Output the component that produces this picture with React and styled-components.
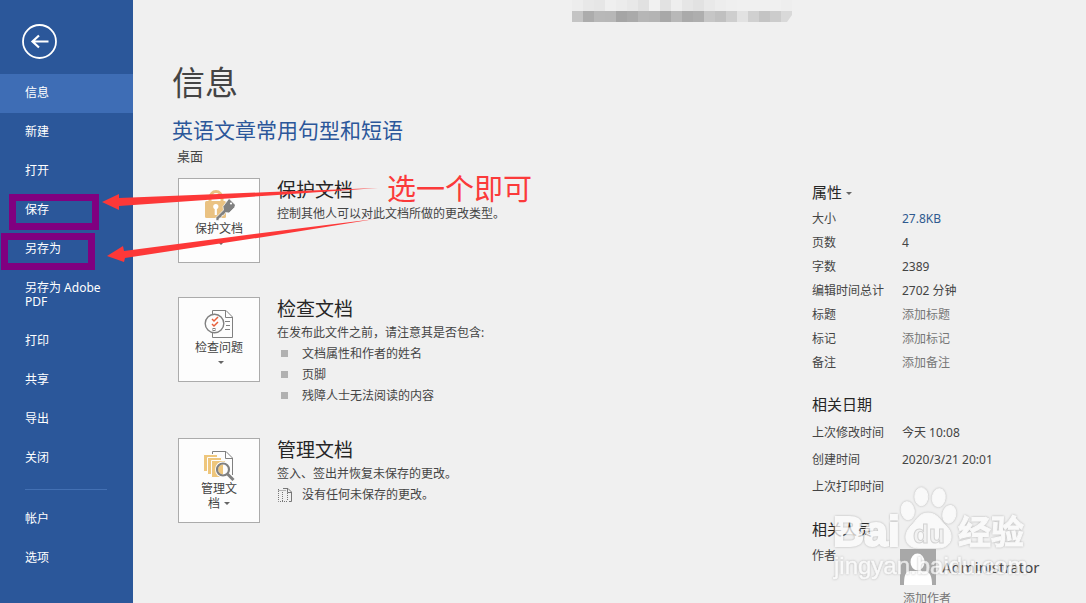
import React from 'react';
import styled, { createGlobalStyle } from 'styled-components';

const GlobalStyle = createGlobalStyle`
  * { box-sizing: border-box; }
  body {
    margin: 0;
    background: #f0f0f0;
    color: #444;
    font: 12px/24px "Noto Sans", "Noto Sans CJK SC", sans-serif;
  }
  button { font: inherit; color: inherit; }
`;

const Shell = styled.div`
  position: relative;
  display: flex;
  height: 100vh;
  overflow: hidden;
`;

const Sidebar = styled.nav`
  flex: 0 0 133px;
  background: #2b579a;
  color: #fff;
`;

const BackButton = styled.button`
  display: block;
  margin: 23px 0 15px 21px;
  padding: 0;
  width: 36px;
  height: 36px;
  border: 0;
  background: none;
  svg { display: block; }
`;

const NavItem = styled.button`
  display: block;
  width: 100%;
  padding: 12px 25px 13px;
  border: 0;
  background: ${(p) => (p.$active ? '#3e6db5' : 'transparent')};
  line-height: 14px;
  text-align: left;
`;

const Divider = styled.hr`
  height: 1px;
  margin: 11px 26px 10px 25px;
  border: 0;
  background: #4370b3;
`;

const Main = styled.main`
  flex: 1;
  min-width: 0;
  padding: 61px 0 0 39px;
`;

const Title = styled.h1`
  margin: 0;
  font-size: 33px;
  line-height: 44px;
  font-weight: 400;
`;

const DocName = styled.h2`
  margin: 0;
  padding-top: 11px;
  font-size: 21px;
  line-height: 28px;
  font-weight: 400;
  color: #2b579a;
`;

const DocPath = styled.p`
  margin: 0 5px 10px;
  font-size: 13px;
`;

const Columns = styled.div`
  display: grid;
  grid-template-columns: 1fr 274px;
`;

const Sections = styled.div`
  display: flex;
  flex-direction: column;
  gap: 32px;
  padding-left: 6px;
`;

const Section = styled.section`
  display: flex;
  align-items: flex-start;
  gap: 17px;
  min-height: 87px;
`;

const TileButton = styled.button`
  display: flex;
  flex-direction: column;
  align-items: center;
  flex: 0 0 82px;
  height: 85px;
  padding: 10px 15px 0;
  border: 1px solid #ababab;
  background: #fdfdfd;
  line-height: 15px;
  svg { display: block; flex: none; }
`;

const TileLabel = styled.span`
  display: block;
`;

const Caret = styled.i`
  display: inline-block;
  margin: ${(p) => (p.$below ? '6px 0 0 3px' : '0 0 3px 4px')};
  border: solid transparent;
  border-width: 3px 3px 0;
  border-top-color: #666;
`;

const SectionTitle = styled.h3`
  margin: 0;
  font-size: 19px;
  line-height: 24px;
  font-weight: 400;
  color: #262626;
`;

const Text = styled.p`
  margin: 0;
  padding-top: 2px;
  line-height: 20px;
`;

const Bullets = styled.ul`
  margin: 0;
  padding: 0 0 0 4px;
  list-style: none;
`;

const Bullet = styled.li`
  display: flex;
  align-items: center;
  gap: 14px;
  line-height: 21px;
  &::before {
    content: '';
    width: 7px;
    height: 7px;
    background: #b1b1b1;
  }
`;

const Note = styled.p`
  display: flex;
  align-items: center;
  gap: 9px;
  margin: 0;
  line-height: 21px;
`;

const Properties = styled.aside`
  padding-top: 2px;
`;

const GroupTitle = styled.h4`
  margin: 0 0 3px;
  font-size: 15px;
  line-height: 24px;
  font-weight: 400;
  color: #262626;
`;

const PropTable = styled.table`
  margin-bottom: 17px;
  border-collapse: collapse;
  th, td {
    height: ${(p) => p.$row}px;
    padding: 0;
    font-weight: 400;
    text-align: left;
    white-space: nowrap;
  }
  th { width: 90px; }
`;

const Value = styled.td`
  color: ${(p) => (p.$hint ? '#777' : p.$accent ? '#2f5a8f' : '#444')};
`;

const AuthorRow = styled.div`
  display: flex;
  align-items: flex-start;
`;

const AuthorLabel = styled.span`
  flex: 0 0 88px;
`;

const Person = styled.div`
  display: flex;
  align-items: center;
  gap: 6px;
  padding-top: 5px;
  font-size: 15px;
  svg { display: block; }
`;

const AddAuthor = styled.p`
  margin: 2px 0 0 91px;
  color: #777;
`;

const Overlay = styled.svg`
  position: absolute;
  left: 0;
  top: 0;
  pointer-events: none;
`;

const Callout = styled.p`
  position: absolute;
  left: 387px;
  top: 169px;
  margin: 0;
  font-size: 29px;
  line-height: 40px;
  color: #fb3a3a;
`;

const Mosaic = styled.svg`
  position: absolute;
  left: 572px;
  top: 0;
`;

const Watermark = styled.svg`
  position: absolute;
  left: 828px;
  top: 480px;
  pointer-events: none;
  opacity: 0.75;
  .mark { filter: drop-shadow(0 0 1px #a0a0a0); }
`;

const LockIcon = () => (
  <svg width="32" height="32" viewBox="0 0 32 32">
    <path d="M7 13V9a6 6.500 0 0 1 12 0v4" fill="none" stroke="#eac282" strokeWidth="3" />
    <rect x="2" y="12" width="21" height="17" rx="1.500" fill="#eac282" />
    <circle cx="12.800" cy="17.500" r="2.600" fill="#fff" />
    <path d="M11.700 18h2.200v8h-2.200z" fill="#fff" />
    <path
      d="M26 9.500L32.500 16l-1 2.500-5.500 5.500-3.500-0.500-1.500 2.500-2 0.500-0.500 2-2 0.500-1 2.500h-2.500v-3l7.500-7.500-0.500-3.500z"
      fill="#808080"
      stroke="#fdfdfd"
      strokeWidth="0.700"
    />
    <circle cx="28" cy="14.500" r="1.100" fill="#fff" />
  </svg>
);

const InspectIcon = () => (
  <svg width="32" height="32" viewBox="-1 0 32 32" fill="none" stroke="#808080">
    <path d="M8.500 6V2.500H22l6.500 6.500v20.500H8.500V25M21.500 2.500v7h7" />
    <path d="M21 13.500h5M22 17.500h4M21 21.500h5" />
    <circle cx="10.500" cy="15.500" r="9.300" fill="#fdfdfd" strokeWidth="1.400" />
    <path d="M8 11l2 2 4-4M8 16l2 2 4-4" stroke="#e8603c" strokeWidth="1.500" />
    <rect x="9" y="20.500" width="2" height="2" />
  </svg>
);

const ManageIcon = () => (
  <svg width="32" height="32" viewBox="-1 0 32 32" fill="none" stroke="#808080">
    <path d="M8.500 5V2.500H22l6.500 6.500v17M21.500 2.500v7h7" />
    <g fill="#eec67c" stroke="#fdfdfd">
      <path d="M-0.500 5.500h14v17h-14z" />
      <path d="M3.500 8.500h14v17h-14z" />
      <path d="M7.500 11.500h14v17h-14z" />
    </g>
    <circle cx="19" cy="20.500" r="8" fill="#fdfdfd" stroke="none" />
    <path d="M19 15.500v10a5 5 0 0 1 0-10z" fill="#eec67c" stroke="none" />
    <circle cx="19" cy="20.500" r="6" strokeWidth="2.200" />
    <path d="M23.500 25l6 6" strokeWidth="3" />
  </svg>
);

const DraftIcon = () => (
  <svg width="16" height="16" viewBox="0 0 16 16" fill="none" stroke="#777">
    <path d="M6 1.500h5l3.500 3.500v9.500H12M10.500 1.500v4h4" />
    <path d="M1.500 2v12.500H11M5.500 5v9M1.500 3.500h8M10.500 6v8" strokeDasharray="1 1" />
  </svg>
);

const NAV = ['信息', '新建', '打开', '保存', '另存为', '另存为 Adobe PDF', '打印', '共享', '导出', '关闭'];

const PROPS = [
  ['大小', '27.8KB', 'accent'],
  ['页数', '4'],
  ['字数', '2389'],
  ['编辑时间总计', '2702 分钟'],
  ['标题', '添加标题', 'hint'],
  ['标记', '添加标记', 'hint'],
  ['备注', '添加备注', 'hint'],
];

const DATES = [
  ['上次修改时间', '今天 10:08'],
  ['创建时间', '2020/3/21 20:01'],
  ['上次打印时间', ''],
];

const MOSAIC = [
  'ed e8 e6 ef ec e8 e1 f1 e2 ee e6 e2 e9 ed ef f0 f0 f0 f0 ee'.split(' '),
  'c4 ac b8 b7 a5 aa b6 b4 a8 b8 aa ae c6 c0 ce e2 d0 c4 cc d9'.split(' '),
];

const PropRows = ({ rows, row }) => (
  <PropTable $row={row}>
    <tbody>
      {rows.map(([label, value, kind]) => (
        <tr key={label}>
          <th scope="row">{label}</th>
          <Value $hint={kind === 'hint'} $accent={kind === 'accent'}>{value}</Value>
        </tr>
      ))}
    </tbody>
  </PropTable>
);

export default function App() {
  return (
    <Shell>
      <GlobalStyle />
      <Sidebar>
        <BackButton aria-label="返回">
          <svg width="36" height="36" viewBox="0 0 36 36" fill="none" stroke="#fff">
            <circle cx="18.500" cy="18.500" r="16.500" strokeWidth="1.800" />
            <path d="M11.500 18.500H27.500M18 12.500l-6.500 6 6.500 6" strokeWidth="2.200" />
          </svg>
        </BackButton>
        {NAV.map((label) => (
          <NavItem key={label} $active={label === '信息'}>{label}</NavItem>
        ))}
        <Divider />
        <NavItem>帐户</NavItem>
        <NavItem>选项</NavItem>
      </Sidebar>

      <Main>
        <Title>信息</Title>
        <DocName>英语文章常用句型和短语</DocName>
        <DocPath>桌面</DocPath>
        <Columns>
          <Sections>
            <Section>
              <TileButton>
                <LockIcon />
                <TileLabel>保护文档</TileLabel>
                <Caret $below />
              </TileButton>
              <div>
                <SectionTitle>保护文档</SectionTitle>
                <Text>控制其他人可以对此文档所做的更改类型。</Text>
              </div>
            </Section>
            <Section>
              <TileButton>
                <InspectIcon />
                <TileLabel>检查问题</TileLabel>
                <Caret $below />
              </TileButton>
              <div>
                <SectionTitle>检查文档</SectionTitle>
                <Text>在发布此文件之前，请注意其是否包含:</Text>
                <Bullets>
                  <Bullet>文档属性和作者的姓名</Bullet>
                  <Bullet>页脚</Bullet>
                  <Bullet>残障人士无法阅读的内容</Bullet>
                </Bullets>
              </div>
            </Section>
            <Section>
              <TileButton>
                <ManageIcon />
                <TileLabel>管理文<br />档<Caret /></TileLabel>
              </TileButton>
              <div>
                <SectionTitle>管理文档</SectionTitle>
                <Text>签入、签出并恢复未保存的更改。</Text>
                <Note><DraftIcon />没有任何未保存的更改。</Note>
              </div>
            </Section>
          </Sections>

          <Properties>
            <GroupTitle>属性<Caret /></GroupTitle>
            <PropRows rows={PROPS} row={24} />
            <GroupTitle>相关日期</GroupTitle>
            <PropRows rows={DATES} row={27} />
            <GroupTitle>相关人员</GroupTitle>
            <AuthorRow>
              <AuthorLabel>作者</AuthorLabel>
              <Person>
                <svg width="36" height="36" viewBox="0 0 36 36">
                  <path d="M0 0h36v36H0z" fill="#a8a8a8" />
                  <ellipse cx="17.500" cy="13" rx="7" ry="8.500" fill="#fff" />
                  <path d="M4 36c0-9 1-13 6-14h15c5 1 7 5 7 14z" fill="#fff" />
                </svg>
                Administrator
              </Person>
            </AuthorRow>
            <AddAuthor>添加作者</AddAuthor>
          </Properties>
        </Columns>
      </Main>

      <Mosaic width="220" height="22" viewBox="0 0 220 22" aria-hidden="true">
        {MOSAIC.map((row, y) => row.map((c, x) => (
          <path
            key={`${x}-${y}`}
            fill={`#${c}${c}${c}`}
            d={y === 1 && x === 19 ? 'M209 11h11v4l-5 7h-6z' : `M${x * 11} ${y * 11}h11v11h-11z`}
          />
        )))}
      </Mosaic>

      <Watermark width="204" height="106" viewBox="0 0 204 106" aria-hidden="true">
        <g className="mark" fill="#fcfcfc" stroke="#fcfcfc">
          <ellipse cx="79.700" cy="30.700" rx="6.500" ry="9" transform="rotate(-8 79.700 30.700)" />
          <ellipse cx="93.300" cy="16.700" rx="6.500" ry="9" />
          <ellipse cx="110.700" cy="17.700" rx="6.500" ry="9" transform="rotate(8 110.700 17.700)" />
          <ellipse cx="121.300" cy="34.300" rx="6.500" ry="9" transform="rotate(12 121.300 34.300)" />
          <path d="M100 33c9 0 12 7 18 13 9 8 6 22-8 22H91c-14 0-17-13-8-22 6-6 8-13 17-13z" />
          <g fontFamily="Liberation Sans, Noto Sans CJK SC, sans-serif" fontWeight="700" strokeWidth="2">
            <text x="5" y="66" fontSize="43">Bai</text>
            <text x="130" y="64" fontSize="33" strokeWidth="1">经验</text>
          </g>
          <text x="6" y="94" fontSize="24" fontFamily="Liberation Sans, sans-serif" strokeWidth="0.500">jingyan.baidu.com</text>
        </g>
        <text x="85" y="63" fontSize="26" fontWeight="700" fontFamily="Liberation Sans, sans-serif" fill="#f2f2f2" stroke="#cacaca">du</text>
      </Watermark>

      <Overlay width="400" height="280" viewBox="0 0 400 280" aria-hidden="true">
        <g fill="none" stroke="#800080" strokeWidth="7">
          <rect x="12.500" y="197.500" width="83" height="29" />
          <rect x="4.500" y="236.500" width="87" height="30" />
        </g>
        <g fill="#fd3838">
          <path d="M102 202l17-8v4l151-6 108-4-108 7.500-151 10.500v4z" />
          <path d="M107 256l16-10 1 5 146-19 105-13-105 17-145 22-1 4z" />
        </g>
      </Overlay>
      <Callout>选一个即可</Callout>
    </Shell>
  );
}
